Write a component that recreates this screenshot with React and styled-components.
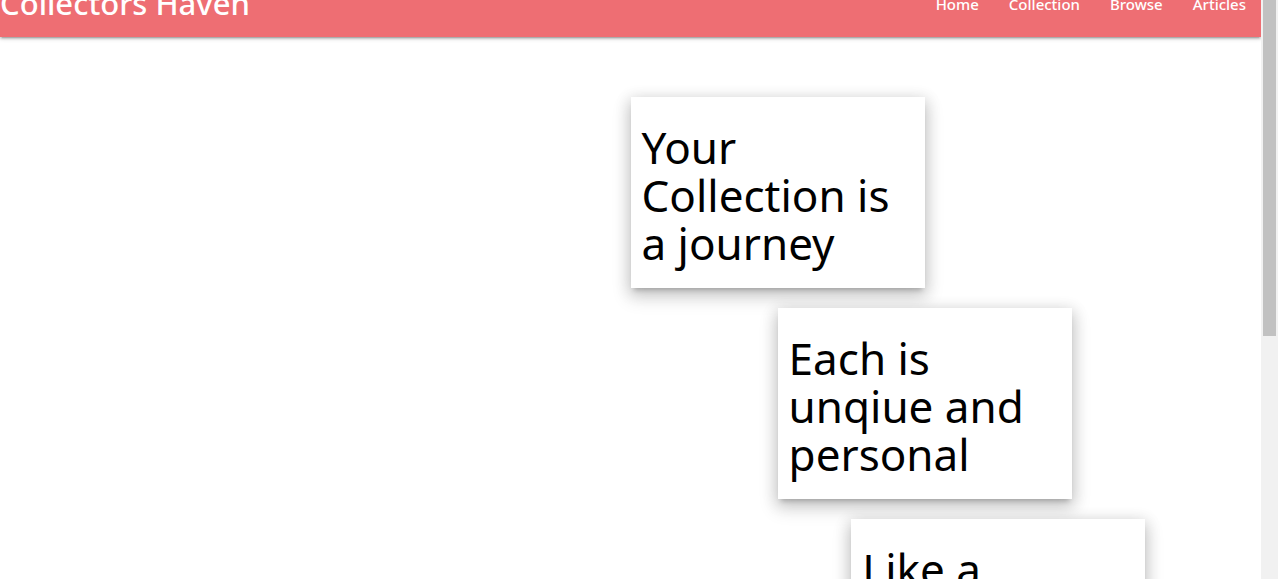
import React from "react";
import styled, { createGlobalStyle } from "styled-components";

const GlobalStyle = createGlobalStyle`
  * { box-sizing: border-box; }
  body {
    margin: 0;
    background: #ffffff;
    color: #000000;
    font-family: "Noto Sans", "Open Sans", sans-serif;
    font-size: 15px;
    overflow: hidden;
  }
`;

const Window = styled.div`
  display: flex;
  height: 100vh;
  overflow: hidden;
`;

const Page = styled.div`
  flex: 1;
  min-width: 0;
`;

const NavBar = styled.nav`
  display: flex;
  justify-content: space-between;
  height: 64px;
  margin-top: -27px;
  line-height: 62px;
  background: #ee6e73;
  box-shadow: 0 2px 2px 0 rgba(0, 0, 0, 0.14),
    0 3px 1px -2px rgba(0, 0, 0, 0.12), 0 1px 5px 0 rgba(0, 0, 0, 0.2);
`;

const Brand = styled.a`
  color: #ffffff;
  font-size: 31px;
  font-weight: 500;
  line-height: 60px;
  text-decoration: none;
  white-space: nowrap;
`;

const NavList = styled.ul`
  display: flex;
  margin: 0;
  padding: 0;
  list-style: none;
`;

const NavLink = styled.a`
  display: block;
  padding: 0 15px;
  color: #ffffff;
  font-size: 15px;
  font-weight: 500;
  text-decoration: none;
`;

const Container = styled.main`
  display: flex;
  flex-direction: column;
  gap: 20px;
  width: 70%;
  margin: 60px auto 0;
`;

const Card = styled.section`
  width: calc(100% / 3);
  margin-left: calc(100% / 12 * ${(p) => p.$offset});
  padding: 26px 11px 21px;
  background: #ffffff;
  box-shadow: 0 8px 17px 2px rgba(0, 0, 0, 0.14),
    0 3px 14px 2px rgba(0, 0, 0, 0.12), 0 5px 5px -3px rgba(0, 0, 0, 0.2);
`;

const CardTitle = styled.h3`
  margin: 0;
  font-size: 44px;
  font-weight: 400;
  line-height: 48px;
`;

const ScrollTrack = styled.div`
  flex: none;
  width: 17px;
  padding: 0 2px;
  background: #f1f1f1;
`;

const ScrollThumb = styled.div`
  height: 58%;
  background: #c1c1c1;
`;

const links = ["Home", "Collection", "Browse", "Articles"];

const cards = [
  { text: "Your Collection is a journey", offset: 6 },
  { text: "Each is unqiue and personal", offset: 8 },
  { text: "Like a", offset: 9 },
];

export default function App() {
  return (
    <Window>
      <GlobalStyle />
      <Page>
        <NavBar>
          <Brand href="#home">Collectors Haven</Brand>
          <NavList>
            {links.map((label) => (
              <li key={label}>
                <NavLink href={"#" + label.toLowerCase()}>{label}</NavLink>
              </li>
            ))}
          </NavList>
        </NavBar>
        <Container>
          {cards.map((card) => (
            <Card key={card.text} $offset={card.offset}>
              <CardTitle>{card.text}</CardTitle>
            </Card>
          ))}
        </Container>
      </Page>
      <ScrollTrack aria-hidden="true">
        <ScrollThumb />
      </ScrollTrack>
    </Window>
  );
}
